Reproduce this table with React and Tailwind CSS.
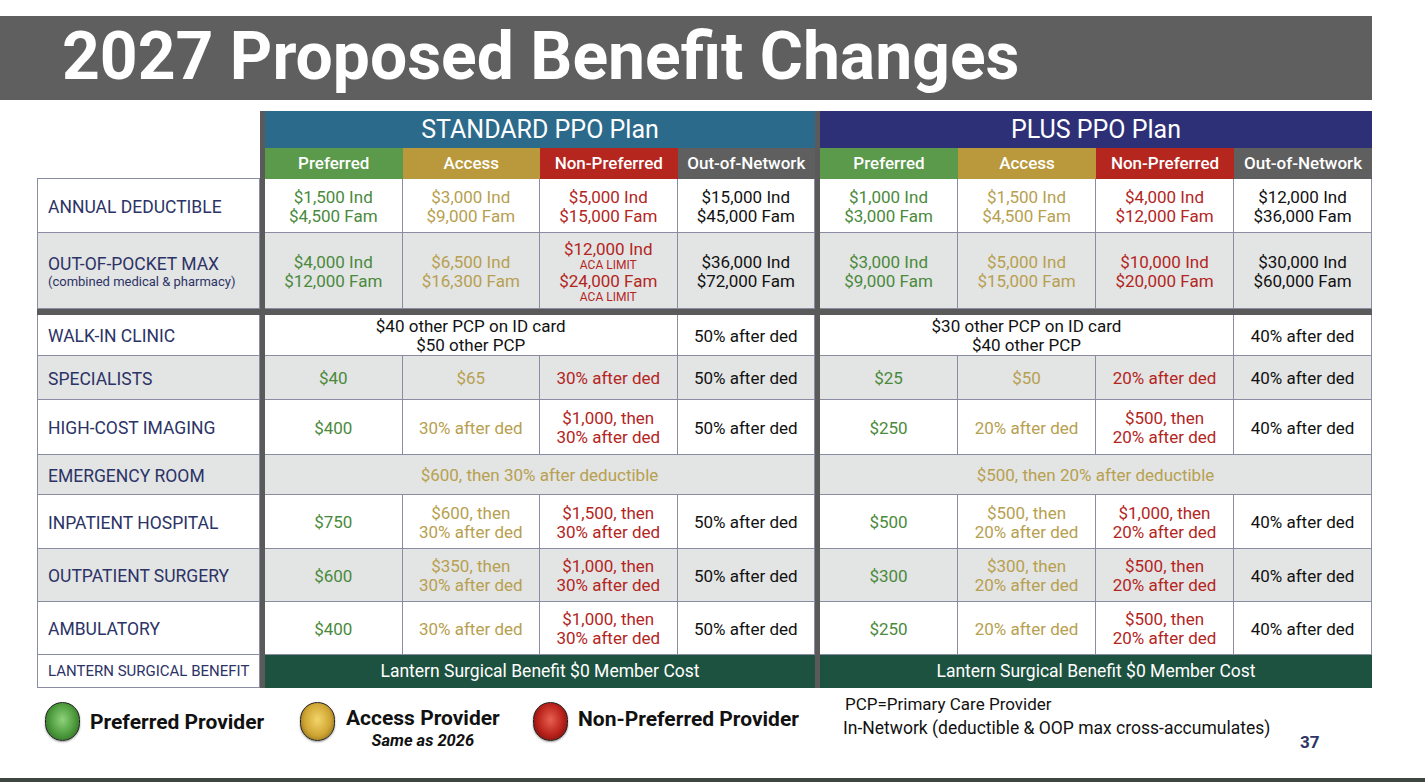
import React from "react";

const G = "text-[#4a8a3c]";
const Y = "text-[#b7a050]";
const R = "text-[#b3261e]";
const K = "text-[#111111]";

const cols = "grid grid-cols-[223px_5px_repeat(4,137.5px)_5px_repeat(4,138px)]";

const rows = [
  {
    label: "ANNUAL DEDUCTIBLE",
    h: "h-[54px]",
    bg: "bg-white",
    std: [
      { c: G, t: ["$1,500 Ind", "$4,500 Fam"] },
      { c: Y, t: ["$3,000 Ind", "$9,000 Fam"] },
      { c: R, t: ["$5,000 Ind", "$15,000 Fam"] },
      { c: K, t: ["$15,000 Ind", "$45,000 Fam"] },
    ],
    plus: [
      { c: G, t: ["$1,000 Ind", "$3,000 Fam"] },
      { c: Y, t: ["$1,500 Ind", "$4,500 Fam"] },
      { c: R, t: ["$4,000 Ind", "$12,000 Fam"] },
      { c: K, t: ["$12,000 Ind", "$36,000 Fam"] },
    ],
  },
  {
    label: "OUT-OF-POCKET MAX",
    sub: "(combined medical & pharmacy)",
    h: "h-[76px]",
    bg: "bg-[#e3e4e4]",
    std: [
      { c: G, t: ["$4,000 Ind", "$12,000 Fam"] },
      { c: Y, t: ["$6,500 Ind", "$16,300 Fam"] },
      { c: R, aca: true, t: ["$12,000 Ind", "$24,000 Fam"] },
      { c: K, t: ["$36,000 Ind", "$72,000 Fam"] },
    ],
    plus: [
      { c: G, t: ["$3,000 Ind", "$9,000 Fam"] },
      { c: Y, t: ["$5,000 Ind", "$15,000 Fam"] },
      { c: R, t: ["$10,000 Ind", "$20,000 Fam"] },
      { c: K, t: ["$30,000 Ind", "$60,000 Fam"] },
    ],
  },
  { divider: true },
  {
    label: "WALK-IN CLINIC",
    h: "h-[41px]",
    bg: "bg-white",
    std: [
      { c: K, span: 3, t: ["$40 other PCP on ID card", "$50 other PCP"] },
      { c: K, t: ["50% after ded"] },
    ],
    plus: [
      { c: K, span: 3, t: ["$30 other PCP on ID card", "$40 other PCP"] },
      { c: K, t: ["40% after ded"] },
    ],
  },
  {
    label: "SPECIALISTS",
    h: "h-[44px]",
    bg: "bg-[#e3e4e4]",
    std: [
      { c: G, t: ["$40"] },
      { c: Y, t: ["$65"] },
      { c: R, t: ["30% after ded"] },
      { c: K, t: ["50% after ded"] },
    ],
    plus: [
      { c: G, t: ["$25"] },
      { c: Y, t: ["$50"] },
      { c: R, t: ["20% after ded"] },
      { c: K, t: ["40% after ded"] },
    ],
  },
  {
    label: "HIGH-COST IMAGING",
    h: "h-[55px]",
    bg: "bg-white",
    std: [
      { c: G, t: ["$400"] },
      { c: Y, t: ["30% after ded"] },
      { c: R, t: ["$1,000, then", "30% after ded"] },
      { c: K, t: ["50% after ded"] },
    ],
    plus: [
      { c: G, t: ["$250"] },
      { c: Y, t: ["20% after ded"] },
      { c: R, t: ["$500, then", "20% after ded"] },
      { c: K, t: ["40% after ded"] },
    ],
  },
  {
    label: "EMERGENCY ROOM",
    h: "h-[40px]",
    bg: "bg-[#e3e4e4]",
    std: [{ c: Y, span: 4, t: ["$600, then 30% after deductible"] }],
    plus: [{ c: Y, span: 4, t: ["$500, then 20% after deductible"] }],
  },
  {
    label: "INPATIENT HOSPITAL",
    h: "h-[54px]",
    bg: "bg-white",
    std: [
      { c: G, t: ["$750"] },
      { c: Y, t: ["$600, then", "30% after ded"] },
      { c: R, t: ["$1,500, then", "30% after ded"] },
      { c: K, t: ["50% after ded"] },
    ],
    plus: [
      { c: G, t: ["$500"] },
      { c: Y, t: ["$500, then", "20% after ded"] },
      { c: R, t: ["$1,000, then", "20% after ded"] },
      { c: K, t: ["40% after ded"] },
    ],
  },
  {
    label: "OUTPATIENT SURGERY",
    h: "h-[53px]",
    bg: "bg-[#e3e4e4]",
    std: [
      { c: G, t: ["$600"] },
      { c: Y, t: ["$350, then", "30% after ded"] },
      { c: R, t: ["$1,000, then", "30% after ded"] },
      { c: K, t: ["50% after ded"] },
    ],
    plus: [
      { c: G, t: ["$300"] },
      { c: Y, t: ["$300, then", "20% after ded"] },
      { c: R, t: ["$500, then", "20% after ded"] },
      { c: K, t: ["40% after ded"] },
    ],
  },
  {
    label: "AMBULATORY",
    h: "h-[53px]",
    bg: "bg-white",
    std: [
      { c: G, t: ["$400"] },
      { c: Y, t: ["30% after ded"] },
      { c: R, t: ["$1,000, then", "30% after ded"] },
      { c: K, t: ["50% after ded"] },
    ],
    plus: [
      { c: G, t: ["$250"] },
      { c: Y, t: ["20% after ded"] },
      { c: R, t: ["$500, then", "20% after ded"] },
      { c: K, t: ["40% after ded"] },
    ],
  },
];

const spanCls = { 1: "", 3: "col-span-3", 4: "col-span-4" };

function Cell({ cell, bg }) {
  return (
    <div
      className={`${spanCls[cell.span || 1]} ${bg} ${cell.c} border-r border-b border-[#8a8ca2] flex flex-col items-center justify-center text-center text-[17px] leading-[19px] pt-[2px]`}
    >
      {cell.aca ? (
        <>
          <span className="leading-[18px]">{cell.t[0]}</span>
          <span className="text-[12px] leading-[14px]">ACA LIMIT</span>
          <span className="leading-[18px]">{cell.t[1]}</span>
          <span className="text-[12px] leading-[14px]">ACA LIMIT</span>
        </>
      ) : (
        cell.t.map((l) => <span key={l}>{l}</span>)
      )}
    </div>
  );
}

const Sep = () => <div className="bg-[#5a5a5a]" />;

function HeaderRows() {
  const sub = [
    ["Preferred", "bg-[#5b9a4a]"],
    ["Access", "bg-[#b9993b]"],
    ["Non-Preferred", "bg-[#b5261f]"],
    ["Out-of-Network", "bg-[#5f5f5f]"],
  ];
  return (
    <>
      <div className={`${cols} h-[37px]`}>
        <div />
        <Sep />
        <div className="col-span-4 bg-[#2b6a8b] border-b border-white flex items-center justify-center text-white text-[25px]">
          STANDARD PPO Plan
        </div>
        <Sep />
        <div className="col-span-4 bg-[#2e3077] border-b border-white flex items-center justify-center text-white text-[25px]">
          PLUS PPO Plan
        </div>
      </div>
      <div className={`${cols} h-[31px]`}>
        <div className="border-b border-[#8a8ca2]" />
        <Sep />
        {sub.map(([t, c]) => (
          <div key={"s" + t} className={`${c} flex items-center justify-center text-white text-[17px] font-medium`}>
            {t}
          </div>
        ))}
        <Sep />
        {sub.map(([t, c]) => (
          <div key={"p" + t} className={`${c} flex items-center justify-center text-white text-[17px] font-medium`}>
            {t}
          </div>
        ))}
      </div>
    </>
  );
}

function Dot({ from, mid, to }) {
  return (
    <div
      className="w-[35px] h-[39px] rounded-full border border-[#222] shadow-[0_1px_2px_rgba(0,0,0,0.4)] shrink-0"
      style={{ background: `radial-gradient(ellipse at 50% 45%, ${from} 0%, ${mid} 55%, ${to} 100%)` }}
    />
  );
}

export default function App() {
  return (
    <div className="w-[1425px] h-[782px] overflow-hidden bg-white flex flex-col font-['Roboto',sans-serif]">
      <div className="mt-[16px] w-[1372px] h-[84px] bg-[#5f5f5f] flex items-center pl-[62px]">
        <h1 className="text-white text-[66px] font-bold leading-none pb-[2px]">
          2027 Proposed Benefit Changes
        </h1>
      </div>

      <div className="mt-[11px] ml-[37px] w-[1335px]">
        <HeaderRows />
        {rows.map((r, i) =>
          r.divider ? (
            <div key={i} className="h-[6px] bg-[#5a5a5a]" />
          ) : (
            <div key={r.label} className={`${cols} ${r.h}`}>
              <div className={`${r.bg} border-l border-r border-b border-[#8a8ca2] flex flex-col justify-center pl-[10px] pt-[2px] text-[#2c3366]`}>
                <span className="text-[17.5px] leading-[20px]">{r.label}</span>
                {r.sub && <span className="text-[13px] leading-[16px]">{r.sub}</span>}
              </div>
              <Sep />
              {r.std.map((c, j) => (
                <Cell key={"s" + j} cell={c} bg={r.bg} />
              ))}
              <Sep />
              {r.plus.map((c, j) => (
                <Cell key={"p" + j} cell={c} bg={r.bg} />
              ))}
            </div>
          )
        )}
        <div className={`${cols} h-[33px]`}>
          <div className="bg-white border-l border-r border-b border-[#8a8ca2] flex items-center pl-[10px] text-[#2c3366] text-[15px]">
            LANTERN SURGICAL BENEFIT
          </div>
          <Sep />
          <div className="col-span-4 bg-[#1e5240] flex items-center justify-center text-white text-[17.5px]">
            Lantern Surgical Benefit $0 Member Cost
          </div>
          <Sep />
          <div className="col-span-4 bg-[#1e5240] flex items-center justify-center text-white text-[17.5px]">
            Lantern Surgical Benefit $0 Member Cost
          </div>
        </div>
      </div>

      <div className="flex pl-[45px] mt-[6px]">
        <div className="w-[255px] flex items-center gap-[10px] pt-[8px] self-start">
          <Dot from="#8fd27a" mid="#4c9a3c" to="#24561c" />
          <span className="text-[21px] font-bold text-[#111] pt-[2px]">Preferred Provider</span>
        </div>
        <div className="w-[233px] flex items-start gap-[11px] pt-[8px]">
          <Dot from="#f3d56a" mid="#d0a634" to="#6e5412" />
          <div className="flex flex-col items-center pt-[4px]">
            <span className="text-[21px] font-bold text-[#111] leading-[25px]">Access Provider</span>
            <span className="text-[16.5px] font-bold italic text-[#111] leading-[20px]">Same as 2026</span>
          </div>
        </div>
        <div className="w-[310px] flex items-start gap-[10px] pt-[8px]">
          <Dot from="#e8604f" mid="#b8211a" to="#5a0c08" />
          <span className="text-[21px] font-bold text-[#111] leading-[26px] pt-[4px]">Non-Preferred Provider</span>
        </div>
        <div className="w-[457px] flex flex-col text-[17.5px] text-[#111] leading-[24px] -mt-[2px]">
          <span className="pl-[2px] text-[17px]">PCP=Primary Care Provider</span>
          <span>In-Network (deductible &amp; OOP max cross-accumulates)</span>
        </div>
        <div className="pt-[36px] text-[17px] font-bold text-[#2e3366]">37</div>
      </div>

      <div className="mt-auto h-[4px] bg-[#3e4641]" />
    </div>
  );
}
